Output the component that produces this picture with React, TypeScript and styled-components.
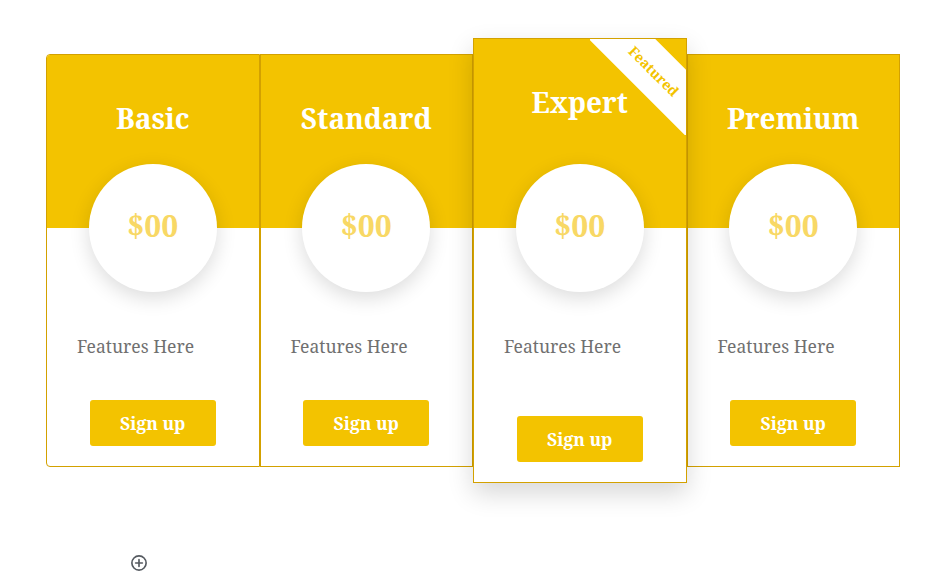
import React from "react";
import styled, { createGlobalStyle } from "styled-components";

const Global = createGlobalStyle`
  html, body { margin: 0; padding: 0; background: #ffffff; }
  body { font-family: "Noto Serif", "DejaVu Serif", serif; }
`;

const YELLOW = "#f3c300";
const BORDER = "#d3a100";

const Page = styled.div`
  padding: 38px 48px 0 46px;
`;

const Row = styled.div`
  display: flex;
  align-items: center;
`;

const Card = styled.div<{ $featured?: boolean; $first?: boolean }>`
  position: relative;
  flex: 1 1 0;
  display: flex;
  flex-direction: column;
  background: #ffffff;
  border: 1px solid ${BORDER};
  border-radius: ${(p) => (p.$first ? "4px 0 0 4px" : "0")};
  overflow: hidden;
  z-index: ${(p) => (p.$featured ? 2 : 1)};
  box-shadow: ${(p) => (p.$featured ? "0 10px 24px rgba(0,0,0,0.16)" : "none")};
`;

const Header = styled.div<{ $featured?: boolean }>`
  height: ${(p) => (p.$featured ? 189 : 173)}px;
  background: ${YELLOW};
  display: flex;
  justify-content: center;
  box-sizing: border-box;
  padding-top: 46px;
`;

const Title = styled.h2`
  margin: 0;
  color: #ffffff;
  font-size: 28px;
  line-height: 34px;
  font-weight: 700;
`;

const Circle = styled.div`
  align-self: center;
  width: 128px;
  height: 128px;
  margin-top: -64px;
  border-radius: 50%;
  background: #ffffff;
  box-shadow: 0 6px 20px rgba(0, 0, 0, 0.14);
  display: flex;
  align-items: center;
  justify-content: center;
  position: relative;
`;

const Price = styled.span`
  color: #f8d865;
  font-size: 30px;
  font-weight: 700;
  line-height: 1;
  margin-top: -4px;
`;

const Features = styled.p`
  margin: 41px 0 0 0;
  padding-left: 30px;
  color: #707070;
  font-size: 17.5px;
  line-height: 27px;
`;

const Button = styled.button<{ $featured?: boolean }>`
  align-self: center;
  width: 126px;
  height: 46px;
  margin: ${(p) => (p.$featured ? 56 : 40)}px 0 20px;
  border: none;
  border-radius: 3px;
  background: ${YELLOW};
  color: #ffffff;
  font-family: inherit;
  font-size: 17.5px;
  font-weight: 700;
  cursor: pointer;
`;

const Ribbon = styled.div`
  position: absolute;
  top: 0;
  right: 0;
  width: 96px;
  height: 96px;
  overflow: hidden;
`;

const RibbonBand = styled.div`
  position: absolute;
  left: 64.5px;
  top: 31.5px;
  width: 170px;
  height: 47px;
  transform: translate(-50%, -50%) rotate(45deg);
  background: #ffffff;
  display: flex;
  align-items: center;
  justify-content: center;
  color: ${YELLOW};
  font-size: 14px;
  font-weight: 700;
  white-space: nowrap;
`;

const AddRow = styled.div`
  margin: 71px 0 0 84px;
  color: #555a60;
  display: flex;
`;

const plans = [
  { name: "Basic" },
  { name: "Standard" },
  { name: "Expert", featured: true },
  { name: "Premium" },
];

export default function App() {
  return (
    <>
      <Global />
      <Page>
        <Row>
          {plans.map((p, i) => (
            <Card key={p.name} $featured={p.featured} $first={i === 0}>
              <Header $featured={p.featured}>
                <Title>{p.name}</Title>
              </Header>
              {p.featured && (
                <Ribbon>
                  <RibbonBand>Featured</RibbonBand>
                </Ribbon>
              )}
              <Circle>
                <Price>$00</Price>
              </Circle>
              <Features>Features Here</Features>
              <Button $featured={p.featured}>Sign up</Button>
            </Card>
          ))}
        </Row>
        <AddRow>
          <svg width="18" height="18" viewBox="0 0 24 24" fill="none" stroke="currentColor" strokeWidth="2.2" strokeLinecap="round">
            <circle cx="12" cy="12" r="9.5" />
            <path d="M12 7.5v9M7.5 12h9" />
          </svg>
        </AddRow>
      </Page>
    </>
  );
}
